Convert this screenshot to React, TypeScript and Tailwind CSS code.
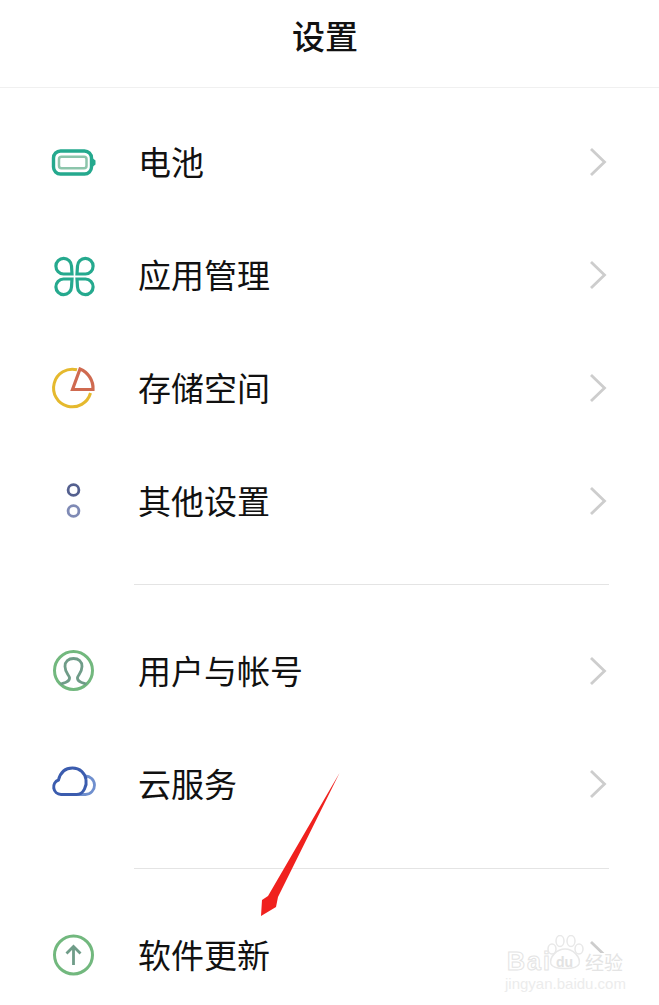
import React from 'react';

const Battery = () => (
  <svg width="48" height="48" viewBox="0 0 48 48" fill="none">
    <rect x="3.5" y="12" width="38" height="23" rx="7" stroke="#25a98e" strokeWidth="3.4" />
    <path d="M43 19.5 L45.5 21.5 V25.5 L43 27.5 Z" fill="#25a98e" />
    <rect x="9" y="17.8" width="27.5" height="11.5" rx="2.5" stroke="#8cc5ab" strokeWidth="2.5" />
  </svg>
);

const Clover = () => (
  <svg width="48" height="48" viewBox="0 0 48 48" fill="none" stroke="#25a98e" strokeWidth="3.2">
    <path d="M22 22 H13.5 A7.8 7.8 0 1 1 21.5 14 Z" />
    <path d="M27 22 H35.5 A7.8 7.8 0 1 0 27.5 14 Z" />
    <path d="M22 27 H13.5 A7.8 7.8 0 1 0 21.5 35 Z" />
    <path d="M27 27 H35.5 A7.8 7.8 0 1 1 27.5 35 Z" />
  </svg>
);

const Storage = () => (
  <svg width="48" height="48" viewBox="0 0 48 48" fill="none">
    <path d="M40.5 28 A18.8 18.8 0 1 1 27 4.8" stroke="#e5b92e" strokeWidth="3" />
    <path d="M22.5 24.5 L30 4 A21 21 0 0 1 43 24.5 Z" stroke="#cf6a50" strokeWidth="3.2" strokeLinejoin="miter" />
  </svg>
);

const Dots = () => (
  <svg width="48" height="48" viewBox="0 0 48 48" fill="none" strokeWidth="2.8">
    <circle cx="23.5" cy="12" r="5.4" stroke="#54608f" />
    <circle cx="23.5" cy="33" r="5.4" stroke="#7f8ab5" />
  </svg>
);

const User = () => (
  <svg width="48" height="48" viewBox="0 0 48 48" fill="none">
    <circle cx="23.5" cy="22.5" r="19" stroke="#72b87e" strokeWidth="3" />
    <path
      d="M10.5 36 C15 34.5 20 34 19.5 29.5 C18.5 26.5 15 24 15 18.5 C15 13.5 18.5 10.5 23.5 10.5 C28.5 10.5 32 13.5 32 18.5 C32 24 28.5 26.5 27.5 29.5 C27 34 32 34.5 36.5 36"
      stroke="#6f9c88"
      strokeWidth="2.8"
    />
  </svg>
);

const Cloud = () => (
  <svg width="48" height="48" viewBox="0 0 48 48" fill="none">
    <path d="M35 15 A8 8 0 0 1 35.5 33.5 H27" stroke="#6f8fce" strokeWidth="2.8" />
    <path
      d="M11 33.5 A7.5 7.5 0 0 1 8.5 19 C10.5 11 16 7 22.5 7 C30 7 35 12 36 18.5 C37 24 34 33.5 26.5 33.5 Z"
      stroke="#3b5cae"
      strokeWidth="3"
    />
  </svg>
);

const Update = () => (
  <svg width="48" height="48" viewBox="0 0 48 48" fill="none">
    <circle cx="23.5" cy="23" r="19" stroke="#72b87e" strokeWidth="3" />
    <path d="M23.5 33 V14.5 M16.5 21.5 L23.5 14.5 L30.5 21.5" stroke="#6f9c88" strokeWidth="2.8" />
  </svg>
);

const Chevron = () => (
  <svg width="20" height="30" viewBox="0 0 20 30" fill="none" className="mr-[51px] mb-[2px]">
    <path d="M3 2 L16.5 15 L3 28" stroke="#cdcdcd" strokeWidth="2.8" />
  </svg>
);

const Row = ({ icon, label }: { icon: React.ReactNode; label: string }) => (
  <div className="flex h-[113px] items-center shrink-0">
    <div className="ml-[50px] w-[88px]">{icon}</div>
    <span className="flex-1 pb-[2px] text-[33px] leading-none text-[#111]">{label}</span>
    <Chevron />
  </div>
);

const Divider = () => <div className="ml-[134px] mr-[50px] h-px bg-[#e4e4e4] shrink-0" />;

export default function App() {
  return (
    <div
      className="relative flex h-[1005px] w-[659px] flex-col overflow-hidden bg-white"
      style={{ fontFamily: '"Noto Sans CJK SC", sans-serif' }}
    >
      <header className="flex h-[88px] shrink-0 items-center justify-center border-b border-[#f0f0f0] pb-[16px] pr-[9px]">
        <h1 className="text-[33px] font-medium leading-none text-[#111]">设置</h1>
      </header>

      <div className="mt-[18px] flex flex-col">
        <Row icon={<Battery />} label="电池" />
        <Row icon={<Clover />} label="应用管理" />
        <Row icon={<Storage />} label="存储空间" />
        <Row icon={<Dots />} label="其他设置" />
      </div>
      <div className="mt-[26px]"><Divider /></div>
      <div className="mt-[30px] flex flex-col">
        <Row icon={<User />} label="用户与帐号" />
        <Row icon={<Cloud />} label="云服务" />
      </div>
      <div className="mt-[27px]"><Divider /></div>
      <div className="mt-[30px] flex flex-col">
        <Row icon={<Update />} label="软件更新" />
      </div>

      {/* red annotation arrow */}
      <svg className="absolute left-[250px] top-[765px]" width="100" height="160" viewBox="0 0 100 160">
        <path d="M89.5 8 L28 132 L26 142 L11 151 L12 135 L18 131 Z" fill="#f0211e" />
      </svg>

      {/* watermark */}
      <div className="absolute left-[505px] top-[935px] h-[55px] w-[122px]">
        <div className="absolute left-[78px] top-[18px] h-[20px] w-[44px] bg-white" />
        <div className="absolute left-0 top-[19px] h-[20px] w-[78px] bg-white" />
        <span
          className="absolute left-[2px] top-[14px] text-[25px] font-bold leading-none tracking-[2px] text-white [-webkit-text-stroke:1px_#e4e4e4]"
          style={{ fontFamily: '"Liberation Sans", sans-serif' }}
        >
          Bai
        </span>
        <svg className="absolute left-[41px] top-0" width="38" height="36" viewBox="0 0 38 36" fill="white" stroke="#e8e8e8" strokeWidth="1.5">
          <ellipse cx="6" cy="14" rx="4" ry="5" />
          <ellipse cx="14" cy="6" rx="4" ry="5.5" />
          <ellipse cx="25" cy="6" rx="4" ry="5.5" />
          <ellipse cx="33" cy="14" rx="4" ry="5" />
          <path d="M19 14 C27 14 35 22 33 29 C31 35 7 35 5 29 C3 22 11 14 19 14 Z" />
        </svg>
        <span
          className="absolute left-[51px] top-[20px] text-[14px] font-bold leading-none text-[#e2e2e2]"
          style={{ fontFamily: '"Liberation Sans", sans-serif' }}
        >
          du
        </span>
        <span className="absolute left-[80px] top-[17px] text-[19px] leading-none text-[#e4e4e4]">经验</span>
        <span
          className="absolute left-0 top-[41px] whitespace-nowrap text-[15px] leading-none text-[#ececec]"
          style={{ fontFamily: '"Liberation Sans", sans-serif' }}
        >
          jingyan.baidu.com
        </span>
      </div>
    </div>
  );
}
